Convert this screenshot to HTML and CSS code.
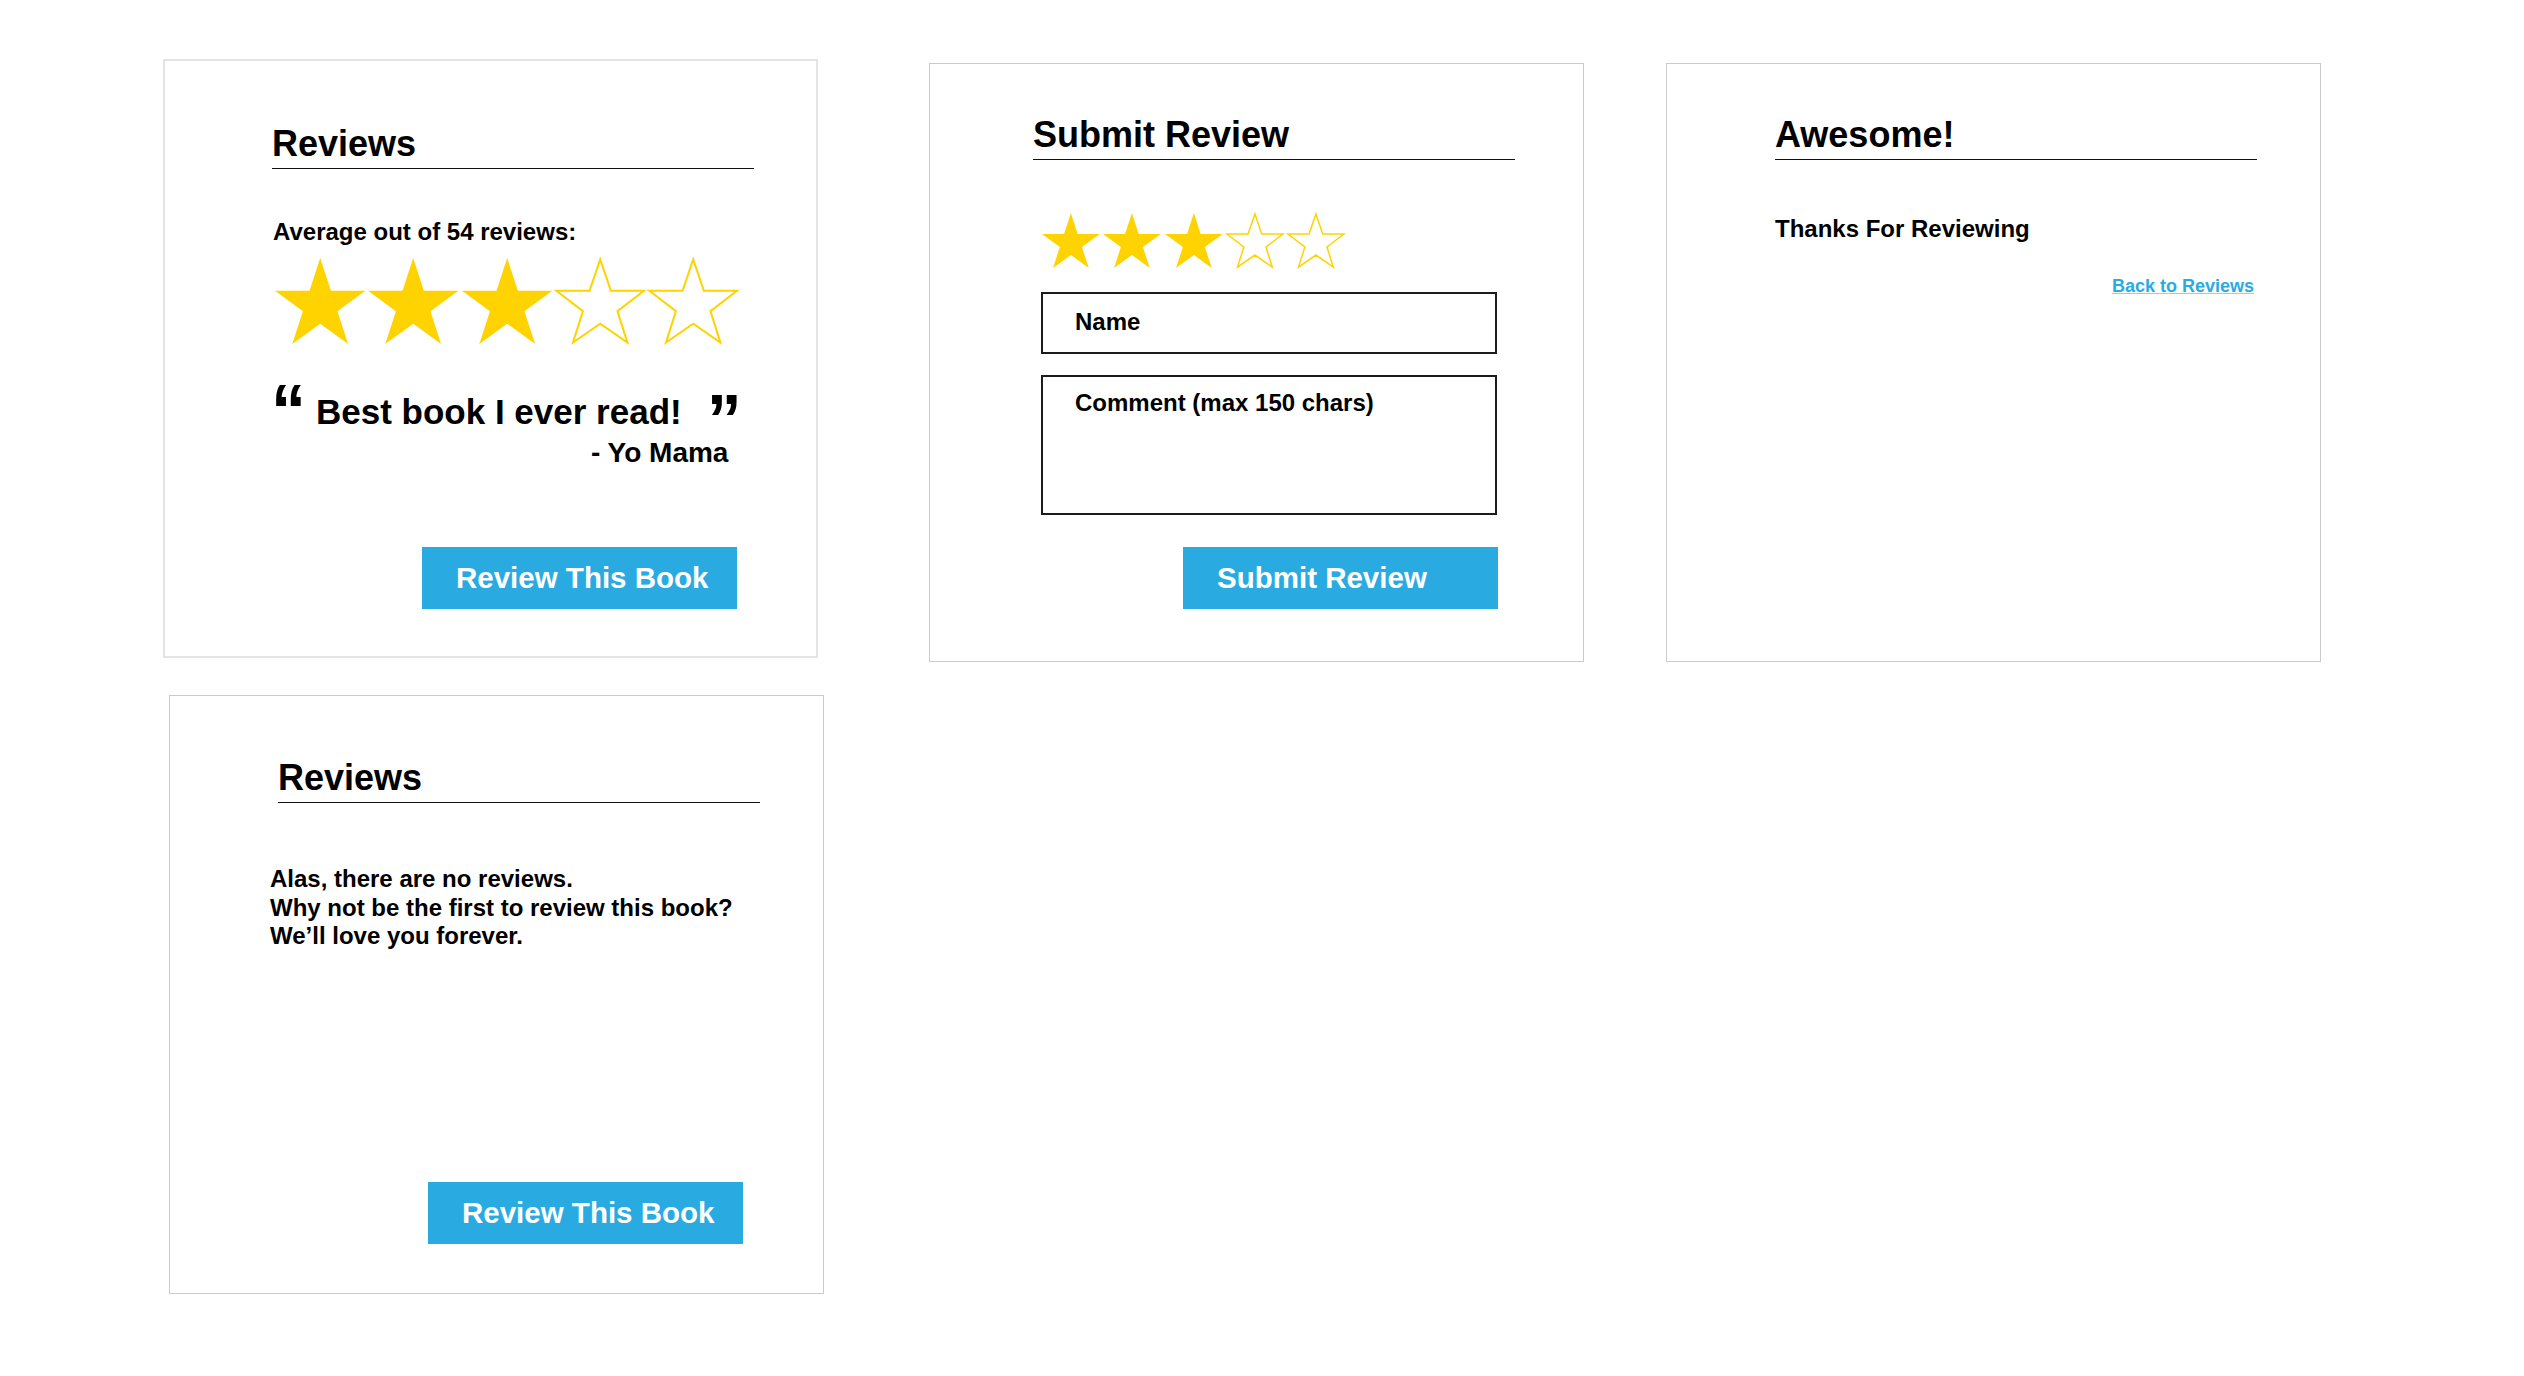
FILE: index.html
```html
<!DOCTYPE html>
<html lang="en">
<head>
<meta charset="utf-8">
<title>Book Reviews Wireframes</title>
<link rel="stylesheet" href="styles.css">
</head>
<body>
<div class="canvas">
  <div class="row">
    <section class="card card--light card--reviews">
      <h2 class="card-title">Reviews</h2>
      <p class="avg-label">Average out of 54 reviews:</p>
      <div class="stars stars--lg">
        <svg class="star" viewBox="0 0 95.1 90.45"><polygon class="star-fill" points="47.55,0 58.78,34.55 95.1,34.55 65.71,55.9 76.94,90.45 47.55,69.1 18.16,90.45 29.39,55.9 0,34.55 36.32,34.55"/></svg>
        <svg class="star" viewBox="0 0 95.1 90.45"><polygon class="star-fill" points="47.55,0 58.78,34.55 95.1,34.55 65.71,55.9 76.94,90.45 47.55,69.1 18.16,90.45 29.39,55.9 0,34.55 36.32,34.55"/></svg>
        <svg class="star" viewBox="0 0 95.1 90.45"><polygon class="star-fill" points="47.55,0 58.78,34.55 95.1,34.55 65.71,55.9 76.94,90.45 47.55,69.1 18.16,90.45 29.39,55.9 0,34.55 36.32,34.55"/></svg>
        <svg class="star" viewBox="0 0 95.1 90.45"><polygon class="star-empty" points="47.55,1.5 58.78,34.55 93.6,34.55 65.71,55.9 76.2,89 47.55,69.1 18.9,89 29.39,55.9 1.5,34.55 36.32,34.55"/></svg>
        <svg class="star" viewBox="0 0 95.1 90.45"><polygon class="star-empty" points="47.55,1.5 58.78,34.55 93.6,34.55 65.71,55.9 76.2,89 47.55,69.1 18.9,89 29.39,55.9 1.5,34.55 36.32,34.55"/></svg>
      </div>
      <div class="quote-row">
        <span class="qmark qmark--open">&ldquo;</span>
        <span class="quote-text">Best book I ever read!</span>
        <span class="qmark qmark--close">&rdquo;</span>
      </div>
      <p class="quote-author">- Yo Mama</p>
      <button class="btn btn--review" type="button">Review This Book</button>
    </section>

    <section class="card card--submit">
      <h2 class="card-title">Submit Review</h2>
      <div class="stars stars--sm">
        <svg class="star" viewBox="0 0 95.1 90.45"><polygon class="star-fill" points="47.55,0 58.78,34.55 95.1,34.55 65.71,55.9 76.94,90.45 47.55,69.1 18.16,90.45 29.39,55.9 0,34.55 36.32,34.55"/></svg>
        <svg class="star" viewBox="0 0 95.1 90.45"><polygon class="star-fill" points="47.55,0 58.78,34.55 95.1,34.55 65.71,55.9 76.94,90.45 47.55,69.1 18.16,90.45 29.39,55.9 0,34.55 36.32,34.55"/></svg>
        <svg class="star" viewBox="0 0 95.1 90.45"><polygon class="star-fill" points="47.55,0 58.78,34.55 95.1,34.55 65.71,55.9 76.94,90.45 47.55,69.1 18.16,90.45 29.39,55.9 0,34.55 36.32,34.55"/></svg>
        <svg class="star" viewBox="0 0 95.1 90.45"><polygon class="star-empty" points="47.55,1.5 58.78,34.55 93.6,34.55 65.71,55.9 76.2,89 47.55,69.1 18.9,89 29.39,55.9 1.5,34.55 36.32,34.55"/></svg>
        <svg class="star" viewBox="0 0 95.1 90.45"><polygon class="star-empty" points="47.55,1.5 58.78,34.55 93.6,34.55 65.71,55.9 76.2,89 47.55,69.1 18.9,89 29.39,55.9 1.5,34.55 36.32,34.55"/></svg>
      </div>
      <div class="field field--name">Name</div>
      <div class="field field--comment">Comment (max 150 chars)</div>
      <button class="btn btn--submit" type="button">Submit Review</button>
    </section>

    <section class="card card--thanks">
      <h2 class="card-title">Awesome!</h2>
      <p class="thanks-text">Thanks For Reviewing</p>
      <a class="back-link" href="#">Back to Reviews</a>
    </section>
  </div>

  <div class="row row--second">
    <section class="card card--empty">
      <h2 class="card-title">Reviews</h2>
      <p class="empty-text">Alas, there are no reviews.<br>Why not be the first to review this book?<br>We’ll love you forever.</p>
      <button class="btn btn--review-empty" type="button">Review This Book</button>
    </section>
  </div>
</div>
</body>
</html>
```

FILE: styles.css
```css
* {
  box-sizing: border-box;
}

html, body {
  margin: 0;
  padding: 0;
  background: #ffffff;
}

body {
  font-family: "Liberation Sans", Arial, Helvetica, sans-serif;
  font-weight: 700;
  color: #000000;
  width: 2524px;
  height: 1376px;
  overflow: hidden;
}

.canvas {
  padding: 59px 0 0 163px;
}

.row {
  display: flex;
  align-items: flex-start;
}

.row--second {
  margin-top: 33px;
}

/* ---------- cards ---------- */
.card {
  width: 655px;
  height: 599px;
  border: 1px solid #cbcbcb;
  background: #ffffff;
  display: flex;
  flex-direction: column;
  align-items: flex-start;
}

.card--light {
  border: 2px solid #e4e4e4;
}

.card--reviews {
  padding: 63px 0 0 107px;
}

.card--submit {
  margin-left: 111px;
  margin-top: 4px;
  padding: 51px 0 0 103px;
}

.card--thanks {
  margin-left: 82px;
  margin-top: 4px;
  padding: 51px 0 0 108px;
}

.card--empty {
  margin-left: 6px;
  padding: 62px 0 0 108px;
}

.card-title {
  margin: 0;
  width: 482px;
  font-size: 36px;
  line-height: 40px;
  font-weight: 700;
  padding-bottom: 4px;
  border-bottom: 1px solid #111111;
}

/* ---------- stars ---------- */
.stars {
  display: flex;
}

.stars--lg {
  margin-top: 12px;
  margin-left: 3px;
  gap: 2.9px;
}

.stars--lg .star {
  width: 90.4px;
  height: 86px;
}

.stars--sm {
  margin-top: 53px;
  margin-left: 9px;
  gap: 3.5px;
}

.stars--sm .star {
  width: 57.8px;
  height: 55px;
}

.star {
  display: block;
  overflow: visible;
}

.star-fill {
  fill: #ffd300;
}

.star-empty {
  fill: #ffffff;
  stroke: #ffd300;
  stroke-width: 2;
  vector-effect: non-scaling-stroke;
  stroke-linejoin: miter;
}

.stars--sm .star-empty {
  stroke-width: 1.5;
}

/* ---------- reviews card ---------- */
.avg-label {
  margin: 49px 0 0 1px;
  font-size: 24px;
  line-height: 28px;
}

.quote-row {
  margin-top: 48px;
  display: flex;
  align-items: flex-start;
}

.qmark {
  font-size: 70px;
  line-height: 30px;
}

.qmark--open {
  margin-top: 3px;
  margin-right: 10px;
  margin-left: -1px;
}

.qmark--close {
  margin-top: 13px;
  margin-bottom: -3px;
  margin-left: 25px;
}

.quote-text {
  font-size: 35px;
  line-height: 40px;
}

.quote-author {
  margin: 5px 0 0 319px;
  font-size: 28px;
  line-height: 32px;
}

/* ---------- buttons ---------- */
.btn {
  width: 315px;
  height: 62px;
  border: 0;
  border-radius: 0;
  background: #29abe2;
  color: #ffffff;
  font-family: "Liberation Sans", Arial, Helvetica, sans-serif;
  font-weight: 700;
  font-size: 29.5px;
  line-height: 62px;
  padding: 0 0 0 34px;
  text-align: left;
  margin-left: 150px;
  cursor: pointer;
}

.btn--review {
  margin-top: 78px;
}

.btn--submit {
  margin-top: 32px;
}

.btn--review-empty {
  margin-top: 231px;
}

/* ---------- submit card ---------- */
.field {
  width: 456px;
  margin-left: 8px;
  border: 2px solid #1c1c1c;
  font-size: 24px;
  line-height: 28px;
  padding-left: 32px;
}

.field--name {
  margin-top: 24px;
  height: 62px;
  padding-top: 14px;
}

.field--comment {
  margin-top: 21px;
  height: 140px;
  padding-top: 12px;
}

/* ---------- thanks card ---------- */
.thanks-text {
  margin: 55px 0 0 0;
  font-size: 24px;
  line-height: 28px;
}

.back-link {
  display: block;
  margin: 32px 0 0 337px;
  font-size: 18px;
  line-height: 22px;
  color: #29abe2;
  text-decoration: underline;
  text-decoration-color: #8fd0ee;
}

/* ---------- empty card ---------- */
.empty-text {
  margin: 62px 0 0 -8px;
  font-size: 24px;
  line-height: 28.5px;
}
```
